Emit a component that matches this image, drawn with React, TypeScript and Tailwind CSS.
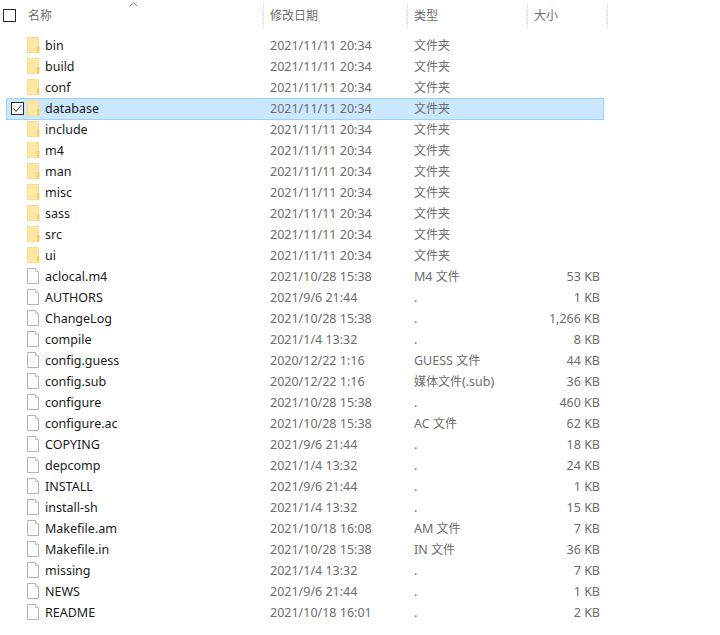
const FONT = "font-['Noto_Sans','Noto_Sans_CJK_SC',sans-serif]";

type Row = { name: string; date: string; type: string; size?: string; folder?: boolean; selected?: boolean };

const folderDate = "2021/11/11 20:34";
const folders = ["bin", "build", "conf", "database", "include", "m4", "man", "misc", "sass", "src", "ui"];

const rows: Row[] = [
  ...folders.map((name) => ({
    name,
    date: folderDate,
    type: "文件夹",
    folder: true,
    selected: name === "database",
  })),
  { name: "aclocal.m4", date: "2021/10/28 15:38", type: "M4 文件", size: "53 KB" },
  { name: "AUTHORS", date: "2021/9/6 21:44", type: ".", size: "1 KB" },
  { name: "ChangeLog", date: "2021/10/28 15:38", type: ".", size: "1,266 KB" },
  { name: "compile", date: "2021/1/4 13:32", type: ".", size: "8 KB" },
  { name: "config.guess", date: "2020/12/22 1:16", type: "GUESS 文件", size: "44 KB" },
  { name: "config.sub", date: "2020/12/22 1:16", type: "媒体文件(.sub)", size: "36 KB" },
  { name: "configure", date: "2021/10/28 15:38", type: ".", size: "460 KB" },
  { name: "configure.ac", date: "2021/10/28 15:38", type: "AC 文件", size: "62 KB" },
  { name: "COPYING", date: "2021/9/6 21:44", type: ".", size: "18 KB" },
  { name: "depcomp", date: "2021/1/4 13:32", type: ".", size: "24 KB" },
  { name: "INSTALL", date: "2021/9/6 21:44", type: ".", size: "1 KB" },
  { name: "install-sh", date: "2021/1/4 13:32", type: ".", size: "15 KB" },
  { name: "Makefile.am", date: "2021/10/18 16:08", type: "AM 文件", size: "7 KB" },
  { name: "Makefile.in", date: "2021/10/28 15:38", type: "IN 文件", size: "36 KB" },
  { name: "missing", date: "2021/1/4 13:32", type: ".", size: "7 KB" },
  { name: "NEWS", date: "2021/9/6 21:44", type: ".", size: "1 KB" },
  { name: "README", date: "2021/10/18 16:01", type: ".", size: "2 KB" },
];

function FolderIcon() {
  return (
    <svg width="13" height="16" viewBox="0 0 13 16" className="shrink-0">
      <rect x="0.5" y="0.5" width="11" height="15" fill="#ffe7a3" stroke="#f7dc93" />
      <rect x="10" y="9" width="2.5" height="6.5" fill="#f5d163" />
    </svg>
  );
}

function FileIcon() {
  return (
    <svg width="13" height="16" viewBox="0 0 13 16" className="shrink-0">
      <path d="M0.5 0.5H8.5L11.5 3.5V15.5H0.5Z" fill="#fdfdfd" stroke="#b4b4b4" />
      <path d="M8.5 0.5V3.5H11.5" fill="#f0f0f0" stroke="#c4c4c4" />
    </svg>
  );
}

function Checkbox({ checked }: { checked?: boolean }) {
  return (
    <svg width="13" height="13" viewBox="0 0 13 13" className="shrink-0">
      <rect x="0.5" y="0.5" width="12" height="12" fill={checked ? "#fff" : "none"} stroke="#2b2b2b" />
      {checked && <path d="M2.5 6.5L5 9.5L10.5 3" fill="none" stroke="#2b2b2b" />}
    </svg>
  );
}

function HeaderCell({ label, className }: { label: string; className: string }) {
  return (
    <div className={`flex h-[25px] items-center border-r border-dotted border-[#d9d9d9] pl-[6px] text-[12px] text-[#6d6d6d] ${className}`}>
      {label}
    </div>
  );
}

// latin text in the type column runs a bit wider than the 12px CJK
function TypeText({ text }: { text: string }) {
  return (
    <>
      {text.split(/([\u4e00-\u9fff]+)/).map((part, i) =>
        /[\u4e00-\u9fff]/.test(part) ? (
          <span key={i} className="text-[12px]">
            {part}
          </span>
        ) : (
          part
        ),
      )}
    </>
  );
}

function FileRow({ row }: { row: Row }) {
  return (
    <div
      className={`flex w-[598px] border text-[12.5px] leading-[19px] ${
        row.selected ? "mb-[-1px] h-[22px] border-[#99d1ff] bg-[#cce8ff]" : "h-[21px] border-transparent"
      }`}
    >
      <div className="flex w-[20px] items-start justify-center pl-[1px] pt-[3px]">{row.selected && <Checkbox checked />}</div>
      <div className="pt-[1px]">{row.folder ? <FolderIcon /> : <FileIcon />}</div>
      <div className="ml-[5px] w-[219px] text-[#1a1a1a]">{row.name}</div>
      <div className="w-[144px] pl-[6px] text-[#6d6d6d]">{row.date}</div>
      <div className="w-[100px] whitespace-nowrap pl-[6px] text-[#6d6d6d]">
        <TypeText text={row.type} />
      </div>
      <div className="w-[92px] text-right text-[#6d6d6d]">{row.size}</div>
    </div>
  );
}

export default function App() {
  return (
    <div className={`relative h-[635px] w-[720px] overflow-hidden bg-white ${FONT}`}>
      <svg width="9" height="5" viewBox="0 0 9 5" className="absolute left-[129px] top-[2px]">
        <path d="M0.5 4.5L4.5 0.5L8.5 4.5" fill="none" stroke="#8a8a8a" />
      </svg>
      <div className="flex pt-[3px]">
        <div className="flex w-[264px] items-center border-r border-dotted border-[#d9d9d9]">
          <div className="ml-[3px] flex w-[25px]">
            <Checkbox />
          </div>
          <span className="text-[12px] text-[#6d6d6d]">名称</span>
        </div>
        <HeaderCell label="修改日期" className="w-[144px]" />
        <HeaderCell label="类型" className="w-[120px]" />
        <HeaderCell label="大小" className="w-[80px]" />
      </div>
      <div className="pl-[6px] pt-[7px]">
        {rows.map((row) => (
          <FileRow key={row.name} row={row} />
        ))}
      </div>
    </div>
  );
}
